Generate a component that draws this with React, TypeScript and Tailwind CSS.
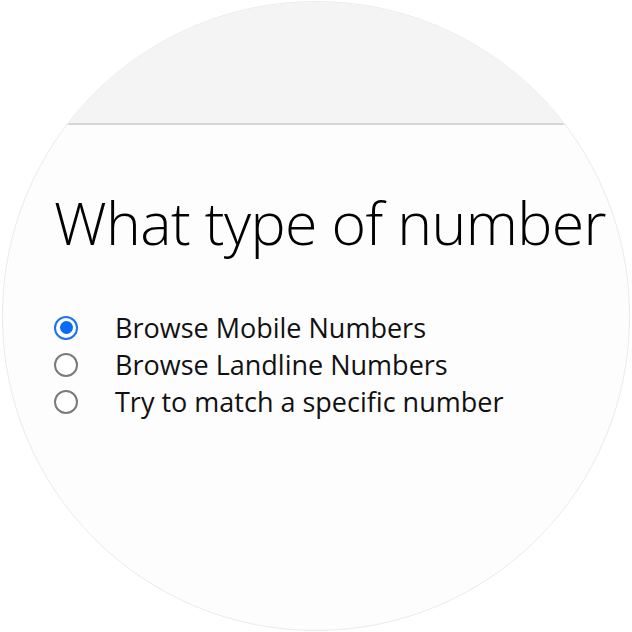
import { useState } from "react";

const options = [
  "Browse Mobile Numbers",
  "Browse Landline Numbers",
  "Try to match a specific number",
];

function Radio({ checked }: { checked: boolean }) {
  return checked ? (
    <span className="flex h-6 w-6 shrink-0 items-center justify-center rounded-full border-2 border-[#1a73f0] bg-white">
      <span className="h-[13px] w-[13px] rounded-full bg-[#0a6cf5]" />
    </span>
  ) : (
    <span className="h-6 w-6 shrink-0 rounded-full border-2 border-[#7a7a7a] bg-white" />
  );
}

export default function App() {
  const [selected, setSelected] = useState(0);

  return (
    <div className="flex h-[632px] w-[632px] items-center justify-center bg-white">
      <div className="h-[630px] w-[628px] overflow-hidden rounded-full border border-[#ebebeb] bg-[#fdfdfd] font-['Open_Sans',sans-serif] text-black">
        <div className="h-[123px] border-b-2 border-[#d6d6d6] bg-[#f4f4f4]" />
        <div className="pl-[51px] pt-[67px]">
          <h1 className="text-[59px] font-light leading-[60px] tracking-[-0.6px] whitespace-nowrap">
            What type of number
          </h1>
          <div className="mt-[57px] flex flex-col">
            {options.map((label, i) => (
              <label
                key={label}
                onClick={() => setSelected(i)}
                className="flex h-[37px] cursor-pointer items-center gap-[37px] text-[27px] leading-[37px] text-[#111]"
              >
                <Radio checked={selected === i} />
                <span>{label}</span>
              </label>
            ))}
          </div>
        </div>
      </div>
    </div>
  );
}
